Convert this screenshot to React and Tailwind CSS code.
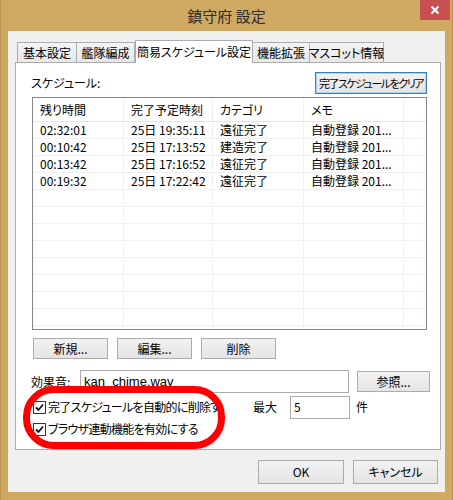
import React from 'react';

const rows = [
  { left: '02:32:01', due: '25日 19:35:11', cat: '遠征完了', memo: '自動登録 201...' },
  { left: '00:10:42', due: '25日 17:13:52', cat: '建造完了', memo: '自動登録 201...' },
  { left: '00:13:42', due: '25日 17:16:52', cat: '遠征完了', memo: '自動登録 201...' },
  { left: '00:19:32', due: '25日 17:22:42', cat: '遠征完了', memo: '自動登録 201...' },
];

const tabs = [
  { label: '基本設定', w: 'w-[60px]' },
  { label: '艦隊編成', w: 'w-[59px]' },
  { label: '簡易スケジュール設定', w: 'w-[118px]', active: true },
  { label: '機能拡張', w: 'w-[58px]' },
  { label: 'マスコット情報', w: 'w-[75px]' },
];

const Button = ({ children, className = '', focused = false }) => (
  <div
    className={`flex items-center justify-center whitespace-nowrap border ${
      focused ? 'border-[#3c7fb1] shadow-[inset_0_0_0_1px_#a8d3f5]' : 'border-[#acacac]'
    } bg-gradient-to-b from-[#f2f2f2] to-[#e4e4e4] leading-[16px] text-black ${className}`}
  >
    {children}
  </div>
);

const Checkbox = ({ label }) => (
  <div className="flex items-center h-[22px]">
    <div className="w-[13px] h-[13px] border border-[#333] bg-white flex items-center justify-center shrink-0">
      <svg width="9" height="9" viewBox="0 0 9 9">
        <path d="M1 4.5 L3.5 7 L8 1.5" stroke="#111" strokeWidth="1.8" fill="none" />
      </svg>
    </div>
    <span className="ml-[2px] text-[12px] leading-[16px] tracking-[-0.7px] whitespace-nowrap">{label}</span>
  </div>
);

const Cell = ({ children, w, last = false }) => (
  <div className={`${w} h-full shrink-0 flex items-center pl-[7px] whitespace-nowrap ${last ? '' : 'border-r border-[#f0f0f0]'}`}>
    {children}
  </div>
);

export default function App() {
  const filler = Array.from({ length: 9 });

  return (
    <div className="relative w-[453px] h-[500px] bg-[#cfa962] border-x border-[#b99050] font-['Noto_Sans_CJK_JP',sans-serif] [font-feature-settings:'palt'] text-black overflow-hidden">
      {/* title bar */}
      <div className="relative h-[31px] flex items-center justify-center">
        <span className="text-[15px] leading-none text-[#2b2b2b] -mt-[1px]">鎮守府 設定</span>
        <div className="absolute right-[2px] top-0 w-[30px] h-[20px] bg-[#c75050] flex items-center justify-center">
          <svg width="10" height="10" viewBox="0 0 10 10">
            <path d="M1.5 1.5 L8.5 8.5 M8.5 1.5 L1.5 8.5" stroke="#fff" strokeWidth="2" />
          </svg>
        </div>
      </div>

      {/* client area */}
      <div className="ml-[7px] w-[437px] h-[461px] bg-[#f0f0f0] pt-[8px] px-[7px]">
        {/* tabs */}
        <div className="flex items-end h-[23px] pl-[2px]">
          {tabs.map((t) =>
            t.active ? (
              <div
                key={t.label}
                className={`${t.w} h-[23px] -mb-[1px] bg-white border border-b-0 border-[#acacac] flex items-center justify-center whitespace-nowrap text-[12px] leading-none relative z-10`}
              >
                {t.label}
              </div>
            ) : (
              <div
                key={t.label}
                className={`${t.w} h-[20px] bg-gradient-to-b from-[#f3f3f3] to-[#e8e8e8] border border-b-0 border-[#acacac] -ml-[1px] first:ml-0 flex items-center justify-center whitespace-nowrap text-[12px] leading-none`}
              >
                {t.label}
              </div>
            )
          )}
        </div>

        {/* tab panel */}
        <div className="w-[426px] h-[388px] bg-white border border-[#acacac] pl-[15px] pt-[9px]">
          <div className="flex items-center w-[396px] h-[22px]">
            <span className="text-[12px] leading-none">スケジュール:</span>
            <Button focused className="ml-auto w-[112px] h-[22px] text-[11px] tracking-[-1.5px]">完了スケジュールをクリア</Button>
          </div>

          {/* list view */}
          <div className="mt-[3px] ml-[1px] w-[395px] h-[233px] border border-[#828790] bg-white overflow-hidden text-[12px] leading-none">
            <div className="flex h-[24px] border-b border-[#e5e5e5]">
              <Cell w="w-[91px]">残り時間</Cell>
              <Cell w="w-[89px]">完了予定時刻</Cell>
              <Cell w="w-[91px]">カテゴリ</Cell>
              <Cell w="w-[100px]">メモ</Cell>
              <Cell w="w-[22px]" last />
            </div>
            {rows.map((r) => (
              <div key={r.due} className="flex h-[17px] border-b border-[#f0f0f0]">
                <Cell w="w-[91px]">{r.left}</Cell>
                <Cell w="w-[89px]">{r.due}</Cell>
                <Cell w="w-[91px]">{r.cat}</Cell>
                <Cell w="w-[100px]">{r.memo}</Cell>
              </div>
            ))}
            {filler.map((_, i) => (
              <div key={i} className="flex h-[17px] border-b border-[#f0f0f0]">
                <Cell w="w-[91px]" />
                <Cell w="w-[89px]" />
                <Cell w="w-[91px]" />
                <Cell w="w-[100px]" />
              </div>
            ))}
          </div>

          {/* list buttons */}
          <div className="flex gap-[9px] mt-[8px] ml-[2px]">
            <Button className="w-[75px] h-[21px] text-[12px]">新規...</Button>
            <Button className="w-[75px] h-[21px] text-[12px]">編集...</Button>
            <Button className="w-[75px] h-[21px] text-[12px]">削除</Button>
          </div>

          {/* sound */}
          <div className="flex items-center mt-[11px] h-[23px]">
            <span className="text-[12px] leading-none w-[49px]">効果音:</span>
            <div className="w-[269px] h-[23px] border border-[#acacac] bg-white pl-[3px] pt-[2px] font-['Liberation_Sans',sans-serif] text-[13px] leading-[17px]">
              kan_chime.wav
            </div>
            <Button className="ml-[8px] w-[73px] h-[21px] text-[12px]">参照...</Button>
          </div>

          {/* options */}
          <div className="flex mt-[3px] ml-[2px]">
            <div className="w-[189px] overflow-hidden">
              <Checkbox label="完了スケジュールを自動的に削除する" />
              <Checkbox label="ブラウザ連動機能を有効にする" />
            </div>
            <div className="flex items-center h-[24px] ml-[31px] mt-[-1px]">
              <span className="text-[12px] leading-none w-[37px]">最大</span>
              <div className="w-[60px] h-[23px] border border-[#acacac] bg-white text-[12px] leading-none pl-[3px] pt-[4px]">5</div>
              <span className="text-[12px] leading-none ml-[6px]">件</span>
            </div>
          </div>
        </div>

        {/* dialog buttons */}
        <div className="flex justify-end gap-[9px] mt-[10px]">
          <Button className="w-[86px] h-[24px] text-[12px]">OK</Button>
          <Button className="w-[85px] h-[24px] text-[12px]">キャンセル</Button>
        </div>
      </div>

      {/* red annotation */}
      <svg className="absolute left-[22px] top-[386px]" width="202" height="63" viewBox="0 0 202 63">
        <rect x="3.5" y="3.5" width="195" height="56" rx="27" fill="none" stroke="#ff0000" strokeWidth="7" />
      </svg>
    </div>
  );
}
